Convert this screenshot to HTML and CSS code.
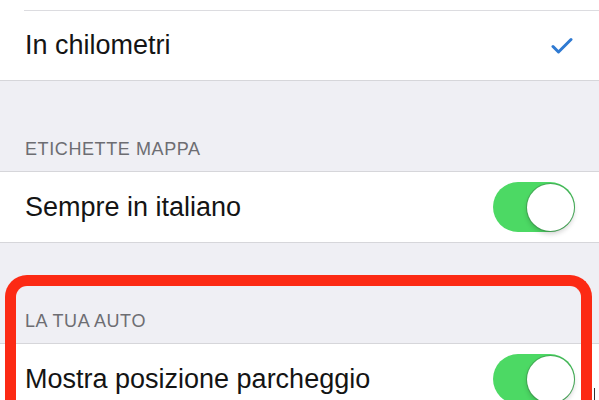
FILE: index.html
```html
<!DOCTYPE html>
<html lang="it">
<head>
  <meta charset="UTF-8" />
  <meta name="viewport" content="width=device-width, initial-scale=1.0"/>
  <title>Mappe</title>
  <link rel="stylesheet" href="styles.css">
</head>
<body>
  <section class="group group-top">
    <div class="cell-cut"></div>
    <div class="cell">
      <span class="label">In chilometri</span>
      <svg class="check" width="22" height="18" viewBox="0 0 22 18">
        <path d="M2 9.5 L7.5 15 L20 2.5" fill="none" stroke="#2f7ad2" stroke-width="3" stroke-linecap="round" stroke-linejoin="round"/>
      </svg>
    </div>
  </section>

  <h3 class="header header-first">ETICHETTE MAPPA</h3>
  <section class="group">
    <div class="cell">
      <span class="label">Sempre in italiano</span>
      <span class="switch on"><span class="knob"></span></span>
    </div>
  </section>

  <h3 class="header header-second">LA TUA AUTO</h3>
  <section class="group group-last">
    <div class="cell">
      <span class="label">Mostra posizione parcheggio</span>
      <span class="switch on"><span class="knob"></span></span>
    </div>
  </section>

  <!-- highlight drawn over the screenshot -->
  <div class="highlight"></div>
  <div class="corner-mark"></div>
</body>
</html>
```

FILE: styles.css
```css
html {
  overflow: hidden;
}
body {
  font-family: 'Liberation Sans', Arial, sans-serif;
  background: #efeff4;
  margin: 0;
  position: relative;
  height: 400px;
  overflow: hidden;
}
.group {
  background: white;
  border-top: 1px solid #d6d6da;
  border-bottom: 1px solid #d6d6da;
}
.group-top {
  border-top: none;
}
.group-last {
  border-bottom: none;
  height: 56px;
  overflow: hidden;
}
.cell-cut {
  height: 10px;
  margin-left: 24px;
  border-bottom: 1px solid #dcdce0;
}
.group-top .cell {
  height: 69px;
}
.cell {
  height: 70px;
  display: flex;
  align-items: center;
  justify-content: space-between;
  padding: 0 24px 0 25px;
}
.label {
  font-size: 27px;
  color: #141414;
}
.check {
  margin-right: 2px;
}
.header {
  margin: 0;
  font-weight: normal;
  font-size: 18px;
  line-height: 22px;
  letter-spacing: 0.6px;
  color: #6d6d72;
  padding: 0 25px 11px;
  display: flex;
  align-items: flex-end;
  box-sizing: border-box;
}
.header-first {
  height: 90px;
}
.header-second {
  height: 100px;
}
.switch {
  width: 82px;
  height: 50px;
  border-radius: 25px;
  background: #4cd964;
  position: relative;
  flex-shrink: 0;
}
.knob {
  position: absolute;
  top: 1.5px;
  right: 1.5px;
  width: 47px;
  height: 47px;
  border-radius: 50%;
  background: white;
  box-shadow: 0 0 0 1px rgba(60, 120, 70, 0.45), 0 3px 5px rgba(0, 0, 0, 0.18);
}
.highlight {
  position: absolute;
  left: 5px;
  top: 275px;
  bottom: 0;
  width: 587px;
  border: 11px solid #fc2a14;
  border-bottom: none;
  border-radius: 22px 22px 0 0;
  box-sizing: border-box;
}
.corner-mark {
  position: absolute;
  left: 594px;
  top: 388px;
  width: 5px;
  height: 12px;
  background: white;
  border-left: 1px solid #333;
}
```
